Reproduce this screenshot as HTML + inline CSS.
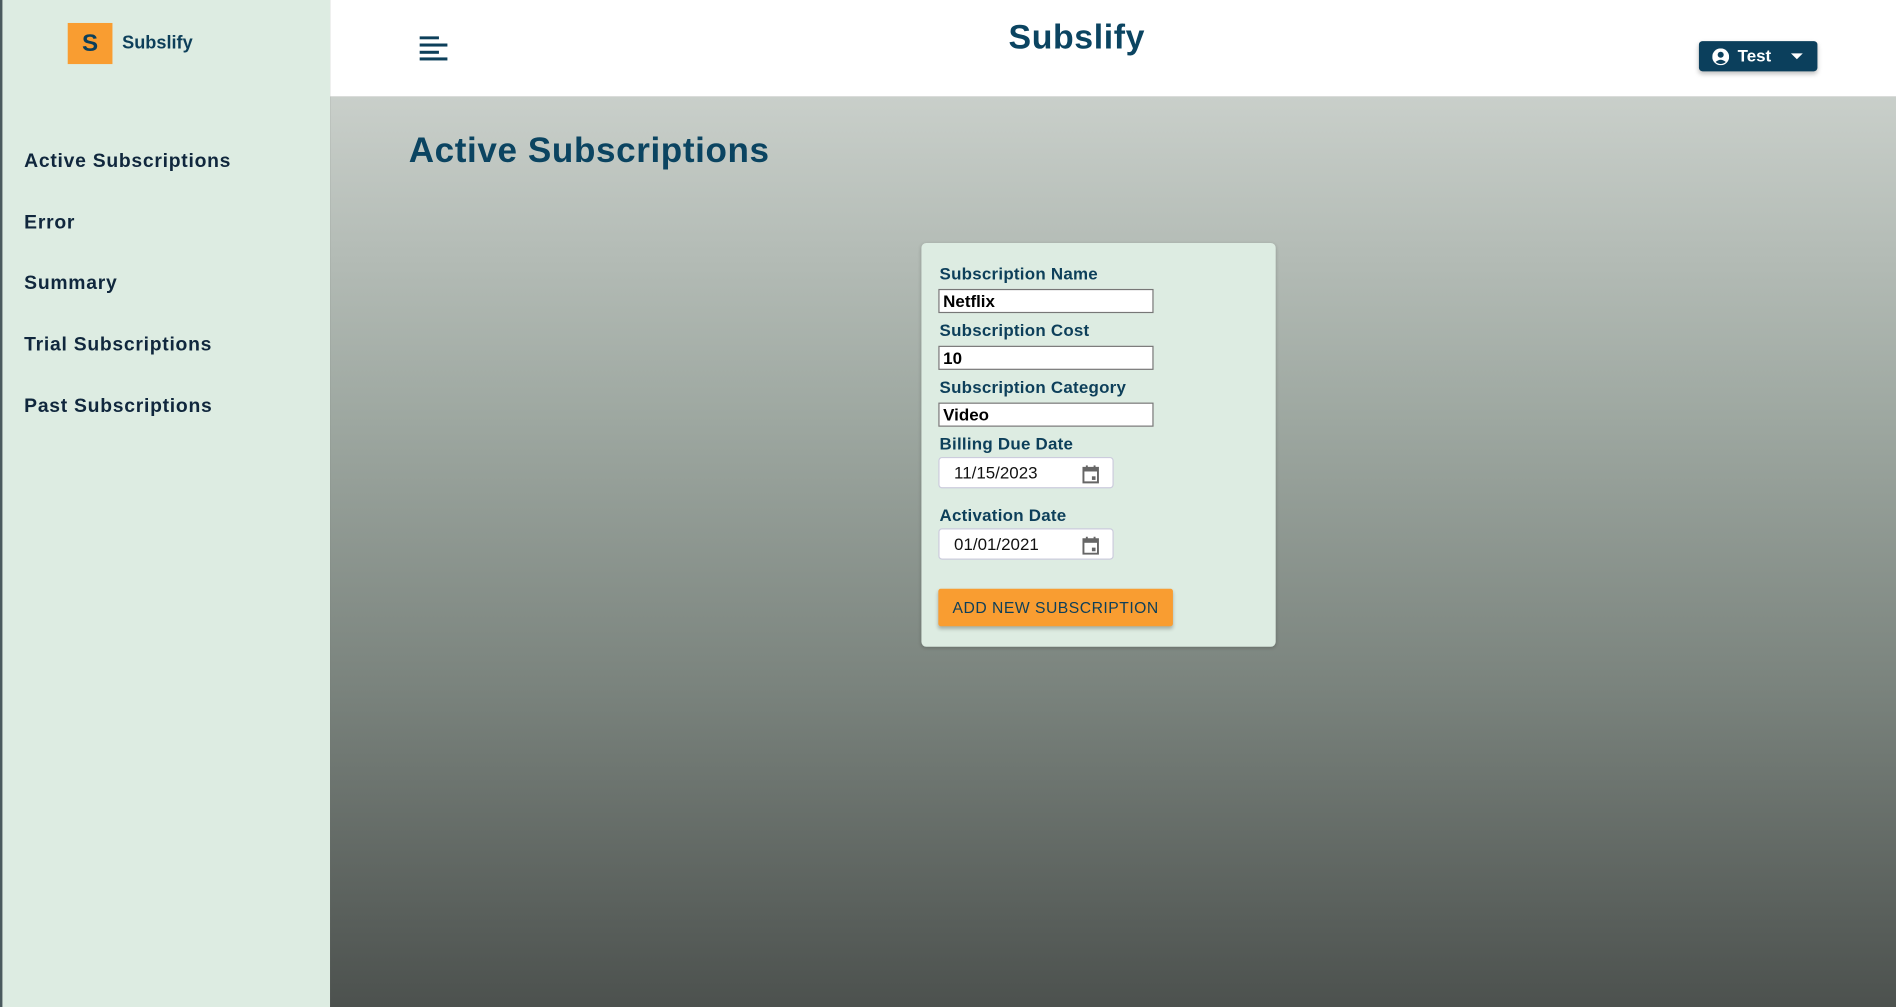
<!DOCTYPE html>
<html><head><meta charset="utf-8"><style>
html,body{margin:0;padding:0;width:1896px;height:1007px;overflow:hidden;background:#4d524f}
#w{position:absolute;left:0;top:0;width:1568px;height:833px;transform:scale(1.2092,1.2089);transform-origin:0 0;font-family:"Liberation Sans",sans-serif}
.a{position:absolute}
#side{left:0;top:0;width:273px;height:833px;background:#ddece2;border-left:2px solid #4a5a5e;box-sizing:border-box}
.nav{position:absolute;left:18px;font-size:16px;font-weight:bold;color:#10273d;letter-spacing:0.6px}
#hdr{left:273px;top:0;width:1295px;height:80px;background:#fff}
#main{left:273px;top:80px;width:1295px;height:753px;background:linear-gradient(#c9cfca,#9ea8a1 35%,#7a837d 65%,#4c514e)}
.lbl{position:absolute;left:15px;font-size:14px;font-weight:bold;color:#0d3f5a;letter-spacing:0.2px}
.inp{position:absolute;left:14px;width:173px;height:18px;background:#fff;border:1px solid #777;font-size:14px;font-weight:bold;line-height:18px;padding-left:3px;box-sizing:content-box;color:#000}
.dt{position:absolute;left:14px;width:145px;height:26px;background:#fff;border:1px solid #ccd;border-radius:3px;font-size:14px;line-height:25px;color:#111;box-sizing:border-box;padding-left:12px}
.cal{position:absolute;right:10px;top:5px}
</style></head><body><div id="w">
<div id="side" class="a">
  <div class="a" style="left:54px;top:19px;width:37px;height:34px;background:#f99d31;color:#0d3f5a;font-weight:bold;font-size:20px;text-align:center;line-height:35px">S</div>
  <div class="a" style="left:99px;top:27px;font-size:15px;font-weight:bold;color:#0d3f5a">Subslify</div>
  <div class="nav" style="top:125px">Active Subscriptions</div>
  <div class="nav" style="top:176px">Error</div>
  <div class="nav" style="top:226px">Summary</div>
  <div class="nav" style="top:277px">Trial Subscriptions</div>
  <div class="nav" style="top:328px">Past Subscriptions</div>
</div>
<div id="hdr" class="a">
  <svg class="a" style="left:74px;top:30px" width="24" height="20"><g fill="#0d3f5a"><rect x="0" y="0" width="16" height="2.5"/><rect x="0" y="6" width="23" height="2.5"/><rect x="0" y="12" width="16" height="2.5"/><rect x="0" y="17.5" width="23" height="2.5"/></g></svg>
  <div class="a" style="left:0;width:1235px;top:15px;text-align:center;font-size:28px;font-weight:bold;color:#0b4461;letter-spacing:0.5px">Subslify</div>
  <div class="a" style="left:1132px;top:34px;width:98px;height:25px;background:#0b3f5c;border-radius:3px;box-shadow:0 2px 4px rgba(0,0,0,.25);color:#fff;font-size:14px;font-weight:bold;line-height:25px">
    <svg class="a" style="left:11px;top:6px" width="14" height="14"><circle cx="7" cy="7" r="7" fill="#fff"/><circle cx="7" cy="5.3" r="2.5" fill="#0b3f5c"/><path d="M2.8 11.3 Q7 7.5 11.2 11.3 Q7 14.5 2.8 11.3Z" fill="#0b3f5c"/></svg>
    <span class="a" style="left:32px">Test</span>
    <svg class="a" style="left:76px;top:10px" width="10" height="6"><path d="M0 0H10L5 5Z" fill="#fff"/></svg>
  </div>
</div>
<div id="main" class="a">
  <div class="a" style="left:65px;top:29px;font-size:29px;font-weight:bold;color:#0b4461;letter-spacing:0.5px">Active Subscriptions</div>
  <div class="a" style="left:489px;top:121px;width:293px;height:334px;background:#ddece2;border-radius:4px;box-shadow:0 1px 3px rgba(0,0,0,.2)">
    <div class="lbl" style="top:17px">Subscription Name</div>
    <div class="inp" style="top:38px">Netflix</div>
    <div class="lbl" style="top:64px">Subscription Cost</div>
    <div class="inp" style="top:85px">10</div>
    <div class="lbl" style="top:111px">Subscription Category</div>
    <div class="inp" style="top:132px">Video</div>
    <div class="lbl" style="top:158px">Billing Due Date</div>
    <div class="dt" style="top:177px">11/15/2023<svg class="cal" width="16" height="16"><path d="M2 3H14V15H2Z" fill="none" stroke="#666" stroke-width="1.6"/><rect x="2" y="3" width="12" height="3" fill="#666"/><rect x="4" y="1" width="1.6" height="3" fill="#666"/><rect x="10.4" y="1" width="1.6" height="3" fill="#666"/><rect x="9" y="10" width="3" height="3" fill="#666"/></svg></div>
    <div class="lbl" style="top:217px">Activation Date</div>
    <div class="dt" style="top:236px">01/01/2021<svg class="cal" width="16" height="16"><path d="M2 3H14V15H2Z" fill="none" stroke="#666" stroke-width="1.6"/><rect x="2" y="3" width="12" height="3" fill="#666"/><rect x="4" y="1" width="1.6" height="3" fill="#666"/><rect x="10.4" y="1" width="1.6" height="3" fill="#666"/><rect x="9" y="10" width="3" height="3" fill="#666"/></svg></div>
    <div class="a" style="left:14px;top:286px;width:194px;height:31px;background:#f99d31;border-radius:2px;box-shadow:0 2px 3px rgba(0,0,0,.25);color:#0d3f5a;font-size:13px;text-align:center;line-height:31px;letter-spacing:0.4px">ADD NEW SUBSCRIPTION</div>
  </div>
</div>
</div></body></html>
